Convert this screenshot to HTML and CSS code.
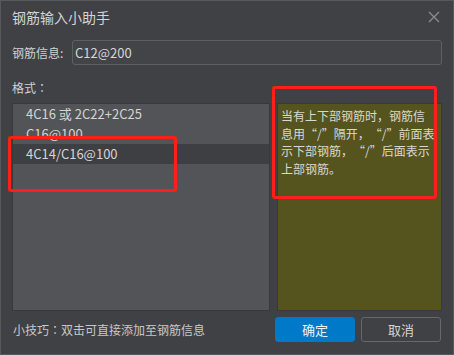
FILE: index.html
```html
<!DOCTYPE html>
<html lang="zh-CN">
<head>
<meta charset="utf-8">
<title>钢筋输入小助手</title>
<link rel="stylesheet" href="styles.css">
</head>
<body>
<div class="dialog">
  <div class="titlebar">
    <span class="title">钢筋输入小助手</span>
    <svg class="close" width="12" height="12" viewBox="0 0 12 12"><path d="M1 1 L11 11 M11 1 L1 11" stroke="#8a8b8e" stroke-width="1.4" fill="none"/></svg>
  </div>
  <div class="info-row">
    <span class="info-label">钢筋信息:</span>
    <div class="input">C12@200</div>
  </div>
  <div class="format-label">格式<span class="colon" lang="zh-TW">：</span></div>
  <div class="content">
    <div class="list">
      <div class="item">4C16 或 2C22+2C25</div>
      <div class="item">C16@100</div>
      <div class="item selected">4C14/C16@100</div>
    </div>
    <div class="panel">当有上下部钢筋时，钢筋信<br>息用<span class="q">“</span>/<span class="q">”</span>隔开，<span class="q">“</span>/<span class="q">”</span>前面表<br>示下部钢筋，<span class="q">“</span>/<span class="q">”</span>后面表示<br>上部钢筋。</div>
  </div>
  <div class="footer">
    <span class="hint">小技巧<span class="colon" lang="zh-TW">：</span>双击可直接添加至钢筋信息</span>
    <div class="buttons">
      <div class="btn primary">确定</div>
      <div class="btn">取消</div>
    </div>
  </div>
  <div class="mark mark-list"></div>
  <div class="mark mark-panel"></div>
</div>
</body>
</html>
```
FILE: styles.css
```css
* { box-sizing: border-box; }
html, body { margin: 0; padding: 0; background: #404144; }
body {
  font-family: "Noto Sans CJK SC", "Microsoft YaHei", sans-serif;
  color: #d2d2d2;
  text-spacing-trim: space-all;
}
.dialog {
  position: relative;
  width: 454px;
  height: 355px;
  background: #404144;
  border: 1px solid #58595c;
  padding: 0 11px;
  display: flex;
  flex-direction: column;
}
.titlebar {
  height: 30px;
  display: flex;
  align-items: center;
  justify-content: space-between;
  padding-top: 2px;
}
.title { font-size: 14px; color: #d4d4d4; line-height: 20px; }
.close { margin-right: 2px; }
.info-row {
  margin-top: 9px;
  display: flex;
  align-items: center;
  height: 25px;
}
.info-label { width: 60px; font-size: 12px; line-height: 18px; }
.input {
  flex: 1;
  height: 25px;
  border: 1px solid #5e5f62;
  border-radius: 3px;
  background: #434447;
  font-size: 13px;
  line-height: 23px;
  padding-left: 2px;
  color: #d6d6d6;
}
.format-label { margin-top: 14px; font-size: 12px; line-height: 18px; height: 18px; }
.colon { font-family: "Noto Sans CJK TC", "Noto Sans CJK SC", sans-serif; }
.content {
  margin-top: 6px;
  height: 208px;
  display: flex;
  gap: 7px;
}
.list {
  width: 258px;
  flex: none;
  background: #535457;
  border: 1px solid #38393b;
  overflow: hidden;
}
.item {
  height: 20px;
  line-height: 20px;
  font-size: 13px;
  padding-left: 13px;
  color: #d4d4d4;
}
.item.selected { background: #3e3f42; }
.panel {
  width: 165px;
  flex: none;
  min-width: 0;
  overflow: hidden;
  background: #55541f;
  border: 1px solid #38393b;
  font-size: 12px;
  line-height: 17.5px;
  padding: 3px 0 0 3px;
  color: #d8d8d0;
  white-space: nowrap;
}
.q { font-feature-settings: "fwid" 1; }
.footer {
  margin-top: 6px;
  display: flex;
  align-items: center;
  justify-content: space-between;
  height: 25px;
}
.hint { font-size: 12px; color: #c8c8c8; padding-left: 1px; }
.buttons { display: flex; gap: 6px; margin-right: 1px; }
.btn {
  width: 80px;
  height: 25px;
  border-radius: 3px;
  border: 1px solid #67686b;
  font-size: 13px;
  line-height: 23px;
  text-align: center;
  color: #d4d4d4;
}
.btn.primary { background: #0079c9; border-color: #0079c9; color: #f2f2f2; }
.mark {
  position: absolute;
  border: 3px solid #ff1f1a;
  border-radius: 3px;
}
.mark-list { left: 7px; top: 135px; width: 169px; height: 56px; }
.mark-panel { left: 271px; top: 85px; width: 165px; height: 113px; }
```
